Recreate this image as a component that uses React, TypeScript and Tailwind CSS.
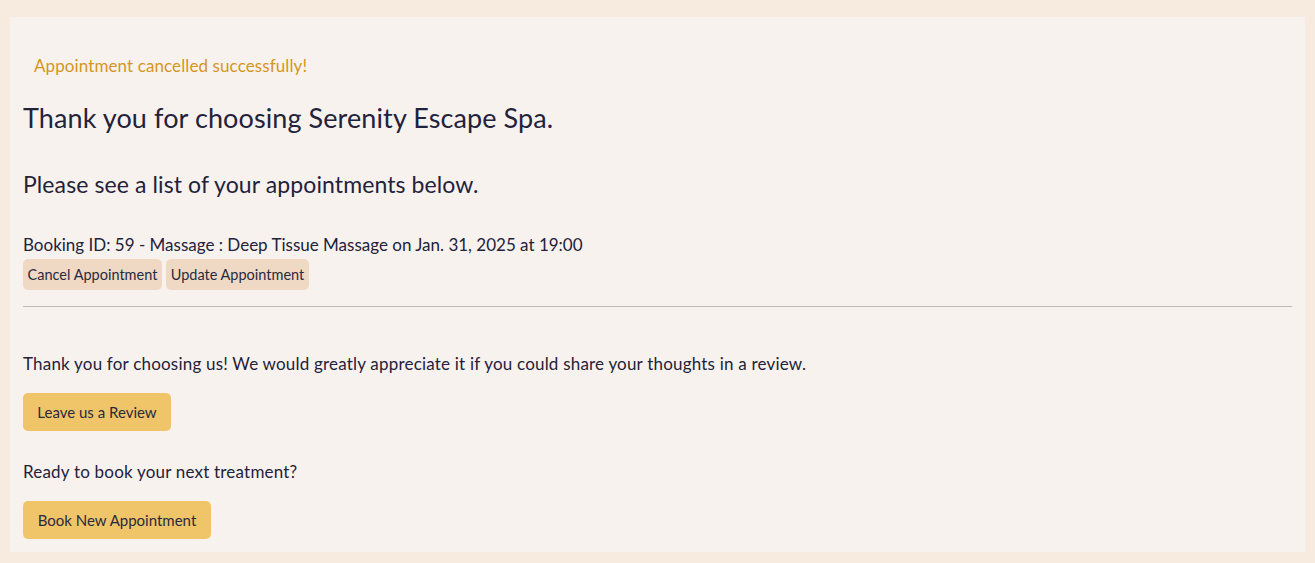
export default function App() {
  return (
    <div className="min-h-[563px] bg-[#f7eadf] pb-[11px] pl-[10px] pr-[10px] pt-[17px] font-['Lato',sans-serif] text-[#22223a]">
      <div className="bg-[#f8f2ee] px-[13px] pb-[13px] pt-[13px]">
        <div className="mt-[24px] px-[11px] text-[17px] leading-6 tracking-[0.1px] text-[#d4961f]">Appointment cancelled successfully!</div>

        <h1 className="mt-[23px] text-[27px] leading-[34px] tracking-[0.1px]">Thank you for choosing Serenity Escape Spa.</h1>
        <h2 className="mt-[35px] text-[23px] leading-[28px] tracking-[0.1px]">Please see a list of your appointments below.</h2>

        <p className="mt-[35px] text-[17px] leading-6">Booking ID: 59 - Massage : Deep Tissue Massage on Jan. 31, 2025 at 19:00</p>
        <div className="mt-[2px] flex gap-[4px]">
          <button type="button" className="h-[31px] w-[139px] rounded-[5px] bg-[#f0d9c4] text-[14.5px] text-[#2a2a3e]">
            Cancel Appointment
          </button>
          <button type="button" className="h-[31px] w-[143px] rounded-[5px] bg-[#f0d9c4] text-[14.5px] text-[#2a2a3e]">
            Update Appointment
          </button>
        </div>

        <hr className="mt-[16px] border-t border-[#bdbab8]" />

        <p className="mt-[45px] text-[17px] leading-6 tracking-[0.2px]">
          Thank you for choosing us! We would greatly appreciate it if you could share your thoughts in a review.
        </p>
        <button type="button" className="mt-[17px] h-[38px] w-[148px] rounded-[5px] bg-[#f0c468] text-[15px] text-[#2a2a3e]">
          Leave us a Review
        </button>

        <p className="mt-[29px] text-[17px] leading-6 tracking-[0.2px]">Ready to book your next treatment?</p>
        <button type="button" className="mt-[17px] block h-[38px] w-[188px] rounded-[5px] bg-[#f0c468] text-[15px] text-[#2a2a3e]">
          Book New Appointment
        </button>
      </div>
    </div>
  );
}
